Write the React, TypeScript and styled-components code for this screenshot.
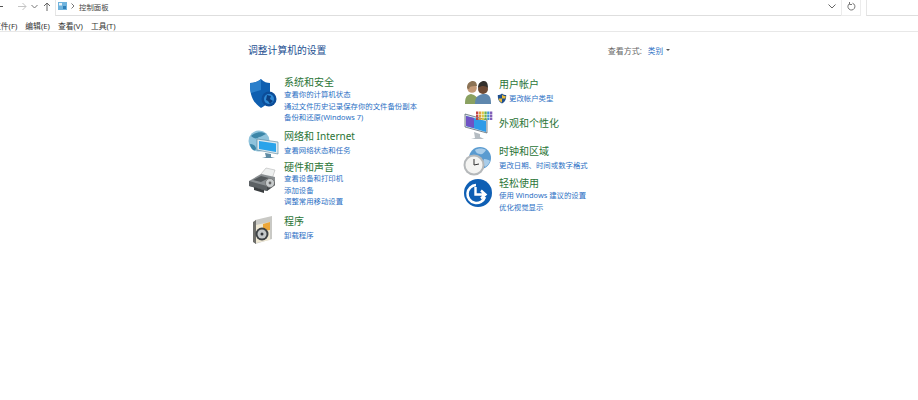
import styled, { createGlobalStyle } from "styled-components";

const GlobalStyle = createGlobalStyle`
    html, body {
        margin: 0;
        padding: 0;
        background: #fff;
        overflow: hidden;
    }
    body {
        font-family: "Noto Sans", "Noto Sans CJK SC", sans-serif;
    }
`;

const Page = styled.div`
    width: 918px;
    height: 400px;
    overflow: hidden;
    background: #fff;
`;

const NavBar = styled.div`
    display: flex;
    height: 16px;
`;

const NavButtons = styled.div`
    width: 55px;
    flex: none;
    display: flex;
    align-items: center;
    padding-bottom: 3px;
    box-sizing: border-box;
    color: #666;
`;

const AddressBox = styled.div`
    flex: 1;
    display: flex;
    align-items: center;
    gap: 4px;
    padding: 0 5px 3px 2px;
    border-left: 1px solid #e6e6e6;
    border-bottom: 1px solid #dedede;
    font-size: 7.4px;
    color: #444;
`;

const Crumb = styled.span`
    flex: 1;
`;

const RefreshBox = styled.div`
    width: 20px;
    flex: none;
    display: flex;
    align-items: center;
    justify-content: center;
    padding-bottom: 3px;
    border: 1px solid #ececec;
    border-top: none;
    box-sizing: border-box;
`;

const SearchBox = styled.div`
    width: 51px;
    flex: none;
    margin-left: 5px;
    border-left: 1px solid #e6e6e6;
    border-bottom: 1px solid #dedede;
`;

const MenuBar = styled.div`
    display: flex;
    align-items: center;
    gap: 8px;
    height: 12px;
    margin-left: -7px;
    padding-top: 3px;
    border-bottom: 1px solid #e8e8e8;
    font-size: 7.8px;
    color: #333;
`;

const Content = styled.main`
    width: 422px;
    margin-left: 248px;
`;

const Header = styled.div`
    display: flex;
    align-items: center;
    justify-content: space-between;
    height: 14px;
    margin-top: 11px;
`;

const Heading = styled.h1`
    margin: 0;
    font-size: 9.8px;
    font-weight: 400;
    color: #1d4f91;
`;

const ViewBy = styled.div`
    display: flex;
    align-items: center;
    font-size: 8px;
    color: #666;
`;

const ViewValue = styled.span`
    margin-left: 6px;
    font-size: 7.6px;
    color: #2a6fc4;
`;

const Caret = styled.span`
    width: 0;
    height: 0;
    margin-left: 3px;
    border: 2px solid transparent;
    border-top: 2.5px solid #555;
    border-bottom: none;
`;

const Columns = styled.div`
    display: grid;
    grid-template-columns: 215px 207px;
`;

const Column = styled.div<{ $top: number }>`
    padding-top: ${(p) => p.$top}px;
`;

const Item = styled.section<{ $gap: number }>`
    display: flex;
    margin-top: ${(p) => p.$gap}px;
`;

const IconSlot = styled.div<{ $top: number; $left: number }>`
    width: 36px;
    height: 0;
    flex: none;
    svg {
        display: block;
        margin-top: ${(p) => p.$top}px;
        margin-left: ${(p) => p.$left}px;
    }
`;

const Title = styled.h2<{ $after: number }>`
    margin: 0 0 ${(p) => p.$after}px;
    height: 13px;
    font-size: 10px;
    line-height: 13px;
    font-weight: 400;
    color: #2a7436;
    white-space: nowrap;
`;

const LinkRow = styled.div<{ $shifted?: boolean }>`
    display: flex;
    align-items: center;
    height: 11.5px;
    margin-left: ${(p) => (p.$shifted ? -2 : 0)}px;
    font-size: 7.4px;
    line-height: 11.5px;
    color: #2a6fc4;
    white-space: nowrap;
`;

const ShieldMark = styled.svg`
    margin-right: 2px;
`;

const ArrowIcon = ({ x, color, flip }: { x: number; color: string; flip?: boolean }) => (
    <svg width="10" height="9" viewBox="0 0 10 9" style={{ marginLeft: x, flex: "none" }}>
        <path d={flip ? "M9 4.5H1M4.5 1L1 4.5 4.5 8" : "M1 4.5H9M5.5 1L9 4.500 5.5 8"} fill="none" stroke={color} strokeWidth="1" />
    </svg>
);

const ShieldIcon = () => (
    <svg width="28" height="31" viewBox="0 0 28 31">
        <path d="M12 1C9 4 5 5 1 5c0 10 1 18 11 25 4-2 7-5 9-8V5C18 5 15 4 12 1z" fill="#0f5fb0" />
        <path d="M12 1C9 4 5 5 1 5c0 4 0 7 1 10l10-3z" fill="#2a7fcb" />
        <circle cx="20" cy="21" r="7.5" fill="#0c4d99" />
        <circle cx="20" cy="21" r="5" fill="#2f8ad6" />
        <path d="M18 17l4 1-1 3 3 2-3 3-2-3-2-1z" fill="#0b3f80" />
    </svg>
);

const NetworkIcon = () => (
    <svg width="32" height="29" viewBox="0 0 32 29">
        <circle cx="11" cy="11" r="10.5" fill="#8fc3dc" />
        <path d="M3 6c4-4 11-5 15-2-3 1-5 3-7 3-2 2-5 2-8-1zM2 14c3 0 5 1 6 4 0 2-1 3-3 2-2-2-3-4-3-6z" fill="#3c86a8" />
        <path d="M9 9l21 3v12L9 20z" fill="#dfeaf0" stroke="#4f7f99" strokeWidth=".6" />
        <path d="M11 11l17 2.5v8.5l-17-3z" fill="#2aa3ea" />
        <path d="M17 23l6 1v3l4 1H14l4-1z" fill="#5f8ba3" />
    </svg>
);

const PrinterIcon = () => (
    <svg width="31" height="27" viewBox="0 0 31 27">
        <path d="M13 7l5-6 9 2-3 9z" fill="#eef0f0" stroke="#aaa" strokeWidth=".5" />
        <path d="M1 14l12-7 14 3v8l-8 6-18-5z" fill="#8a8f92" />
        <path d="M1 14l18 5v5L1 19z" fill="#5c6164" />
        <path d="M19 19l8-4v3l-8 6z" fill="#43484b" />
        <path d="M5 13l8-4 8 2-8 4z" fill="#53585b" />
        <circle cx="22" cy="16" r="4.5" fill="#c8cccd" stroke="#666" strokeWidth=".7" />
        <circle cx="22" cy="16" r="1.4" fill="#666" />
        <path d="M6 20l10 3v3L6 23z" fill="#3a3e40" />
    </svg>
);

const ProgramIcon = () => (
    <svg width="23" height="28" viewBox="0 0 23 28">
        <path d="M3 4l17-4v23L3 28z" fill="#c9c9c5" />
        <path d="M1 6l3-2v24l-3-2z" fill="#6e6e6a" />
        <path d="M4 9l14-3v18L4 27z" fill="#f0e9d4" />
        <path d="M11 8l7-2v8l-7 1z" fill="#eba63a" />
        <circle cx="10" cy="18" r="6.5" fill="#3e4245" />
        <circle cx="10" cy="18" r="4.5" fill="#c4c8c9" />
        <circle cx="10" cy="18" r="1.5" fill="#33363a" />
    </svg>
);

const UsersIcon = () => (
    <svg width="28" height="24" viewBox="0 0 28 24">
        <path d="M1 23c0-6 1-9 6-10l3 1 4 3v6z" fill="#8aa161" />
        <circle cx="8" cy="7" r="4.8" fill="#c49a78" />
        <path d="M3 7c0-5 3-7 6-7s4 3 4 5c-3 0-6 0-7 1-1 2-1 3-3 1z" fill="#8c7355" />
        <path d="M11 23c0-6 2-9 8-10l3 0c4 1 5 4 5 10z" fill="#5f87ad" />
        <circle cx="19" cy="8" r="5" fill="#6d4a35" />
        <path d="M14 7c0-5 3-7 6-7s4 3 4 7c-2-2-6-3-10 0z" fill="#33302c" />
    </svg>
);

const DisplayIcon = () => {
    const swatches = ["#c23b3b", "#e09a35", "#d8c23a", "#67ad44", "#3a8fd0", "#7a57b5"];
    return (
        <svg width="29" height="29" viewBox="0 0 29 29">
            <path d="M1 3l22 6v13L1 16z" fill="#dfe5ea" stroke="#4b5a66" strokeWidth=".7" />
            <path d="M2 5l20 5v11L2 15z" fill="#2e9be8" />
            <path d="M2 5l8 2v10l-8-2z" fill="#6f52c4" />
            <path d="M10 21l6 2v3l4 2H7l4-1z" fill="#b5bcc2" />
            {[0, 1, 2].map((row) =>
                swatches.map((c, i) => (
                    <rect key={`${row}-${i}`} x={12 + i * 2.8} y={0.5 + row * 3} width="2.3" height="2.5" fill={c} opacity={0.95} />
                ))
            )}
        </svg>
    );
};

const ClockIcon = () => (
    <svg width="29" height="29" viewBox="0 0 29 29">
        <circle cx="17" cy="11" r="11" fill="#5a9bd0" />
        <path d="M12 3c3-2 8-2 11 0-2 3-4 5-6 4-2 0-4-1-5-4zM21 12c3 0 5 1 6 2-1 3-3 5-5 6-2-2-2-6-1-8z" fill="#a9cdea" />
        <circle cx="11" cy="18" r="10.5" fill="#b5b8ba" />
        <circle cx="11" cy="18" r="8.5" fill="#f4f4f2" />
        <path d="M11 18V12M11 18l5-1" stroke="#333" strokeWidth="1" fill="none" />
    </svg>
);

const EaseIcon = () => (
    <svg width="28" height="28" viewBox="0 0 28 28">
        <circle cx="14" cy="14" r="14" fill="#0f5fb4" />
        <path d="M12 6a9 9 0 1 0 9 12" fill="none" stroke="#fff" strokeWidth="2.6" />
        <path d="M11.5 8v7.5h9M17 11.5l4.5 4-4.5 4" fill="none" stroke="#fff" strokeWidth="2.4" />
    </svg>
);

const SmallShield = () => (
    <ShieldMark width="10" height="11" viewBox="0 0 10 11">
        <path d="M5 .5C4 1.5 2 2 .8 2c0 4 .6 6.5 4.2 8.5 3.6-2 4.2-4.5 4.2-8.5C8 2 6 1.5 5 .5z" fill="#1f4f8f" />
        <path d="M5 1.5v4H1.5c.3 2 1.3 3 3.5 4.300V5.500h3.400c.2-.8.2-1.500.2-2.500C7 3 6 2.500 5 1.500z" fill="#e8b93a" />
    </ShieldMark>
);

interface PanelItem {
    gap: number;
    after: number;
    top: number;
    left: number;
    icon: React.ReactNode;
    title: string;
    links: string[];
    shield?: boolean;
}

const leftItems: PanelItem[] = [
    { gap: 0, after: 0, top: 2, left: 1, icon: <ShieldIcon />, title: "系统和安全", links: ["查看你的计算机状态", "通过文件历史记录保存你的文件备份副本", "备份和还原(Windows 7)"] },
    { gap: 6, after: 2, top: 0, left: 0, icon: <NetworkIcon />, title: "网络和 Internet", links: ["查看网络状态和任务"] },
    { gap: 5, after: -1, top: 6, left: 0, icon: <PrinterIcon />, title: "硬件和声音", links: ["查看设备和打印机", "添加设备", "调整常用移动设置"] },
    { gap: 7.5, after: 2, top: 1, left: 4, icon: <ProgramIcon />, title: "程序", links: ["卸载程序"] },
];

const rightItems: PanelItem[] = [
    { gap: 0, after: 2, top: 3, left: 1, icon: <UsersIcon />, title: "用户帐户", links: ["更改帐户类型"], shield: true },
    { gap: 12, after: 0, top: -6, left: 1, icon: <DisplayIcon />, title: "外观和个性化", links: [] },
    { gap: 15, after: 2, top: 2, left: 0, icon: <ClockIcon />, title: "时钟和区域", links: ["更改日期、时间或数字格式"] },
    { gap: 6, after: 0, top: 2, left: 1, icon: <EaseIcon />, title: "轻松使用", links: ["使用 Windows 建议的设置", "优化视觉显示"] },
];

const renderItems = (items: PanelItem[]) =>
    items.map((item) => (
        <Item key={item.title} $gap={item.gap}>
            <IconSlot $top={item.top} $left={item.left}>
                {item.icon}
            </IconSlot>
            <div>
                <Title $after={item.after}>{item.title}</Title>
                {item.links.map((link) => (
                    <LinkRow key={link} $shifted={item.shield}>
                        {item.shield && <SmallShield />}
                        {link}
                    </LinkRow>
                ))}
            </div>
        </Item>
    ));

const App = () => (
    <Page>
        <GlobalStyle />
        <NavBar>
            <NavButtons>
                <ArrowIcon x={-6} color="#555" flip />
                <ArrowIcon x={13} color="#c4c4c4" />
                <svg width="7" height="5" viewBox="0 0 7 5" style={{ marginLeft: 4 }}>
                    <path d="M.5 1L3.5 4 6.5 1" fill="none" stroke="#777" />
                </svg>
                <svg width="8" height="9" viewBox="0 0 8 9" style={{ marginLeft: 5 }}>
                    <path d="M4 9V1M1 4l3-3 3 3" fill="none" stroke="#666" />
                </svg>
            </NavButtons>
            <AddressBox>
                <svg width="9" height="8" viewBox="0 0 9 8">
                    <rect width="9" height="8" fill="#6fb3dd" />
                    <rect x="1" y="1" width="3" height="2.5" fill="#e8f2f8" />
                    <rect x="5" y="4" width="3" height="3" fill="#2f7fb8" />
                </svg>
                <svg width="4" height="6" viewBox="0 0 4 6">
                    <path d="M.5.5L3 3 .5 5.5" fill="none" stroke="#777" />
                </svg>
                <Crumb>控制面板</Crumb>
                <svg width="8" height="5" viewBox="0 0 8 5">
                    <path d="M.5.5L4 4 7.5.5" fill="none" stroke="#666" />
                </svg>
            </AddressBox>
            <RefreshBox>
                <svg width="9" height="9" viewBox="0 0 9 9">
                    <path d="M5.5 1.2A3.5 3.5 0 1 1 2.5 1.6M2.5 0v2.5H5" fill="none" stroke="#666" strokeWidth=".9" />
                </svg>
            </RefreshBox>
            <SearchBox />
        </NavBar>
        <MenuBar>
            <span>文件(F)</span>
            <span>编辑(E)</span>
            <span>查看(V)</span>
            <span>工具(T)</span>
        </MenuBar>
        <Content>
            <Header>
                <Heading>调整计算机的设置</Heading>
                <ViewBy>
                    查看方式:
                    <ViewValue>类别</ViewValue>
                    <Caret />
                </ViewBy>
            </Header>
            <Columns>
                <Column $top={19}>{renderItems(leftItems)}</Column>
                <Column $top={21}>{renderItems(rightItems)}</Column>
            </Columns>
        </Content>
    </Page>
);

export default App;
